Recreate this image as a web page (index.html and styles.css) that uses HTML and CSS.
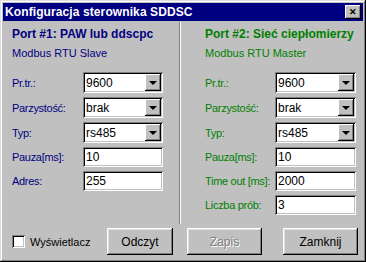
FILE: index.html
```html
<!doctype html>
<html>
<head>
<meta charset="utf-8">
<link rel="stylesheet" href="styles.css">
<title>Konfiguracja sterownika SDDSC</title>
</head>
<body>
<div class="window">
	<div class="titlebar">
		<span class="title">Konfiguracja sterownika SDDSC</span>
		<span class="close">&#x2715;</span>
	</div>
	<div class="panes">
		<div class="pane slave">
			<h1>Port #1: PAW lub ddscpc</h1>
			<p class="proto">Modbus RTU Slave</p>
			<div class="row"><label>Pr.tr.:</label><div class="combo"><span>9600</span><i></i></div></div>
			<div class="row"><label>Parzystość:</label><div class="combo"><span>brak</span><i></i></div></div>
			<div class="row"><label>Typ:</label><div class="combo"><span>rs485</span><i></i></div></div>
			<div class="row"><label>Pauza[ms]:</label><div class="edit">10</div></div>
			<div class="row"><label>Adres:</label><div class="edit">255</div></div>
		</div>
		<div class="sep"></div>
		<div class="pane master">
			<h1>Port #2: Sieć ciepłomierzy</h1>
			<p class="proto">Modbus RTU Master</p>
			<div class="row"><label>Pr.tr.:</label><div class="combo"><span>9600</span><i></i></div></div>
			<div class="row"><label>Parzystość:</label><div class="combo"><span>brak</span><i></i></div></div>
			<div class="row"><label>Typ:</label><div class="combo"><span>rs485</span><i></i></div></div>
			<div class="row"><label>Pauza[ms]:</label><div class="edit">10</div></div>
			<div class="row"><label>Time out [ms]:</label><div class="edit">2000</div></div>
			<div class="row"><label>Liczba prób:</label><div class="edit">3</div></div>
		</div>
	</div>
	<div class="footer">
		<label class="check"><span class="box"></span>Wyświetlacz</label>
		<button class="btn read">Odczyt</button>
		<button class="btn save" disabled>Zapis</button>
		<button class="btn quit">Zamknij</button>
	</div>
</div>
</body>
</html>
```

FILE: styles.css
```css
*{margin:0;padding:0;box-sizing:border-box;}
body {
	font:11px "Liberation Sans",Arial,sans-serif;
	background:#c0c0c0;
}
.window {
	width:366px;
	height:262px;
	background:#c0c0c0;
	padding:3px;
	display:flex;
	flex-direction:column;
	box-shadow:inset -1px -1px 0 #000,inset 1px 1px 0 #dfdfdf,inset -2px -2px 0 #808080,inset 2px 2px 0 #fff;
}
.titlebar {
	height:18px;
	background:#000080;
	color:#fff;
	display:flex;
	align-items:center;
	justify-content:space-between;
	padding:0 2px 0 2px;
}
.title {font-weight:bold;font-size:12px;letter-spacing:0.1px;}
.close {
	width:16px;
	height:14px;
	background:#c0c0c0;
	color:#000;
	font-size:9px;
	font-weight:bold;
	line-height:14px;
	text-align:center;
	box-shadow:inset -1px -1px 0 #000,inset 1px 1px 0 #fff,inset -2px -2px 0 #808080;
}
.panes {
	display:flex;
	height:202px;
	margin-top:1px;
}
.pane {padding:5px 0 0 9px;}
.slave {width:176px;color:#000080;}
.master {flex:1;padding-left:24px;color:#008000;}
.sep {
	width:2px;
	border-left:1px solid #808080;
	border-right:1px solid #fff;
}
h1 {font-size:12px;line-height:14px;}
.proto {line-height:13px;margin:6px 0 12px;}
.row {
	display:flex;
	align-items:center;
	margin-bottom:4px;
}
.row label {width:71px;letter-spacing:-0.3px;}
.master .row label {width:70px;}
.combo,.edit {
	width:80px;
	height:21px;
	background:#fff;
	color:#000;
	font-size:12px;
	display:flex;
	align-items:center;
	padding:0 2px 0 3px;
	box-shadow:inset 1px 1px 0 #808080,inset -1px -1px 0 #fff,inset 2px 2px 0 #000,inset -2px -2px 0 #c0c0c0;
}
.edit {height:20px;}
.master .combo,.master .edit {width:81px;}
.combo span {flex:1;}
.combo i {
	width:16px;
	height:17px;
	background:#c0c0c0;
	position:relative;
	box-shadow:inset -1px -1px 0 #000,inset 1px 1px 0 #fff,inset -2px -2px 0 #808080;
}
.combo i:after {
	content:"";
	position:absolute;
	left:4px;
	top:7px;
	border-left:4px solid transparent;
	border-right:4px solid transparent;
	border-top:4px solid #000;
}
.footer {
	flex:1;
	display:flex;
	align-items:center;
	padding:0 0 0 9px;
}
.check {
	display:flex;
	align-items:center;
	width:95px;
}
.box {
	width:13px;
	height:13px;
	background:#fff;
	margin-right:5px;
	box-shadow:inset 1px 1px 0 #808080,inset -1px -1px 0 #fff,inset 2px 2px 0 #000,inset -2px -2px 0 #c0c0c0;
}
.btn {
	height:27px;
	width:66px;
	font:12px "Liberation Sans",Arial,sans-serif;
	background:#c0c0c0;
	border:0;
	color:#000;
	box-shadow:inset -1px -1px 0 #000,inset 1px 1px 0 #fff,inset -2px -2px 0 #808080,inset 2px 2px 0 #dfdfdf;
}
.save {
	width:75px;
	margin-left:14px;
	color:#808080;
	text-shadow:1px 1px 0 #fff;
}
.quit {width:75px;margin-left:21px;}
```
